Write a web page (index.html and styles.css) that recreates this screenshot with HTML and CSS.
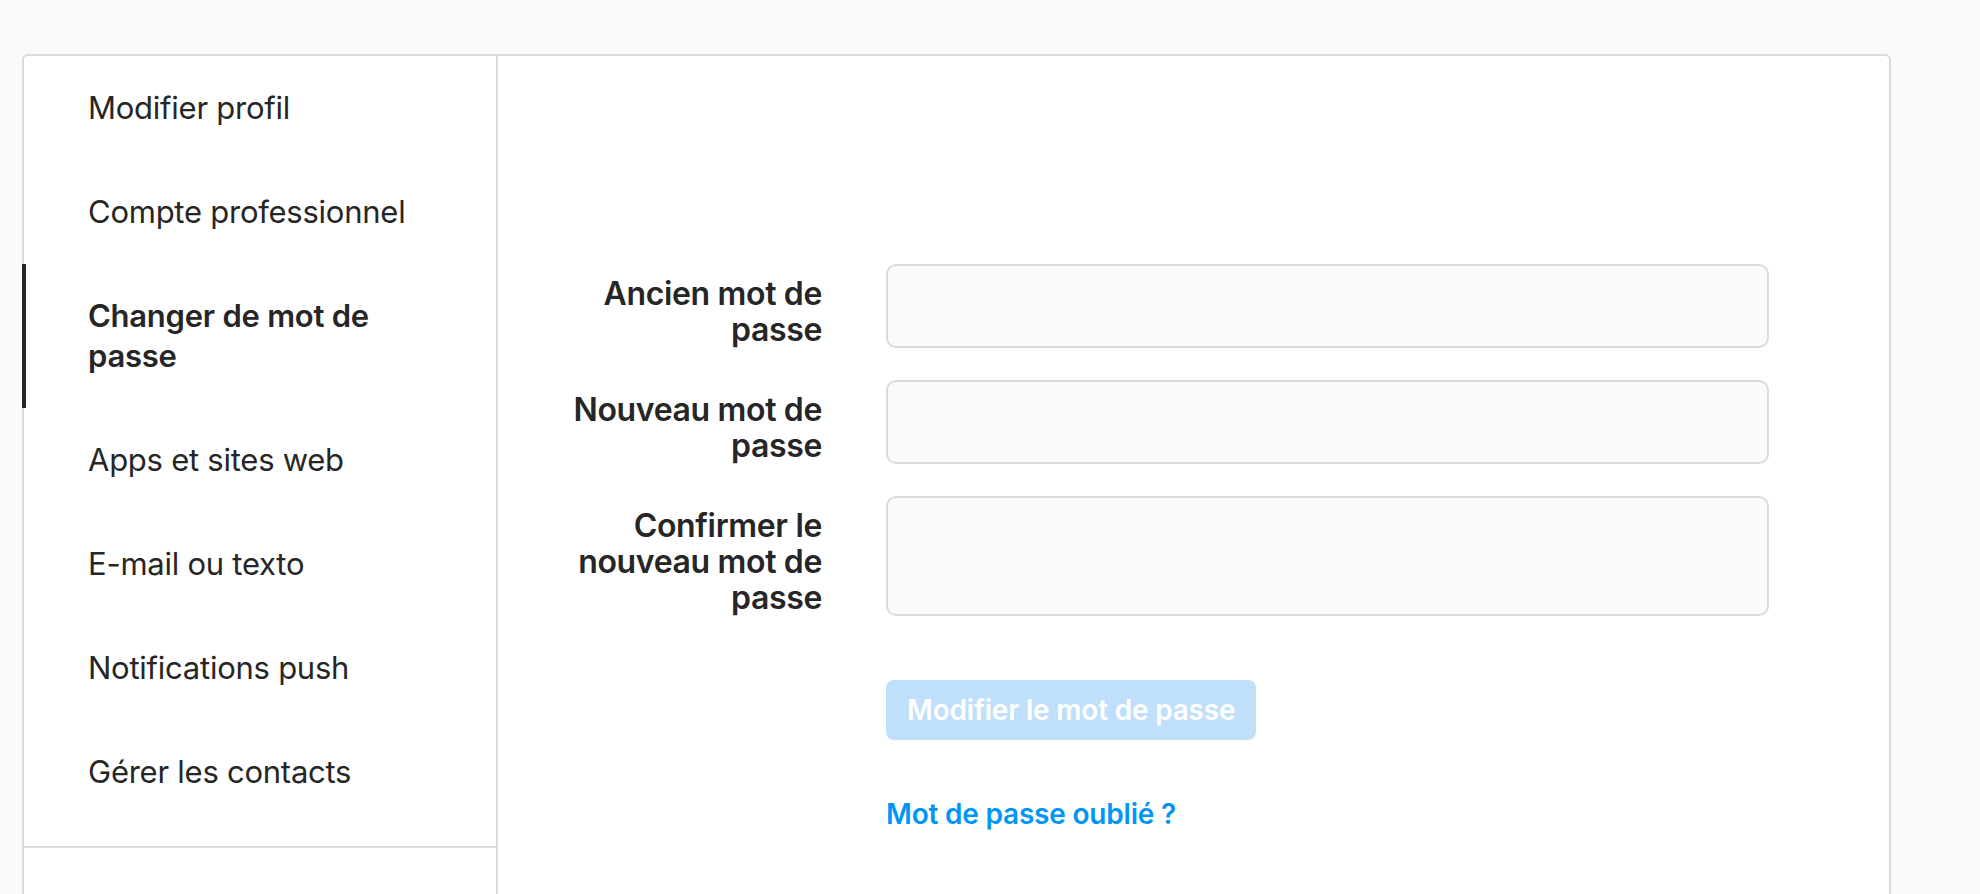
FILE: index.html
```html
<!DOCTYPE html>
<html lang="fr">
<head>
<meta charset="UTF-8" />
<title>Changer de mot de passe</title>
<link rel="stylesheet" href="styles.css">
</head>
<body>
<main class="page">
  <div class="card">
    <!-- menu de gauche -->
    <nav class="sidebar">
      <ul class="menu">
        <li><a href="#">Modifier profil</a></li>
        <li><a href="#">Compte professionnel</a></li>
        <li class="active"><a href="#">Changer de mot de passe</a></li>
        <li><a href="#">Apps et sites web</a></li>
        <li><a href="#">E-mail ou texto</a></li>
        <li><a href="#">Notifications push</a></li>
        <li><a href="#">Gérer les contacts</a></li>
      </ul>
      <div class="sidebar-foot"></div>
    </nav>

    <section class="panel">
      <form class="pwd-form">
        <div class="row">
          <label class="label" for="old">Ancien mot de passe</label>
          <input class="field" id="old" type="password" />
        </div>
        <div class="row">
          <label class="label" for="new">Nouveau mot de passe</label>
          <input class="field" id="new" type="password" />
        </div>
        <div class="row">
          <label class="label" for="confirm">Confirmer le nouveau mot de passe</label>
          <input class="field" id="confirm" type="password" />
        </div>
        <div class="row row-btn">
          <span class="label"></span>
          <div><button class="btn" type="button" disabled>Modifier le mot de passe</button></div>
        </div>
        <div class="row row-link">
          <span class="label"></span>
          <div><a class="forgot" href="#">Mot de passe oublié ?</a></div>
        </div>
      </form>
    </section>
  </div>
</main>
</body>
</html>
```

FILE: styles.css
```css
html, body { margin:0; padding:0; }
body { background:#fafafa; color:#262626; font-family:"Inter", "Noto Sans", sans-serif; overflow:hidden; }

.page { padding:54px 0 0 22px; }
.card { display:flex; width:1865px; min-height:900px; background:#fff; border:2px solid #dbdbdb; border-radius:6px; }

/* menu */
.sidebar { width:472px; flex-shrink:0; border-right:2px solid #dbdbdb; }
.menu { list-style:none; margin:0 0 0 -2px; padding:0 0 22px 0; }
.menu li { border-left:4px solid transparent; padding:32px 32px 32px 62px; }
.menu li a { display:block; color:#262626; text-decoration:none; font-size:31px; line-height:40px; letter-spacing:-0.25px; }
.menu li.active { border-left-color:#262626; }
.menu li.active a { font-weight:600; }
.sidebar-foot { border-top:2px solid #dbdbdb; height:120px; }

/* formulaire */
.panel { flex:1; padding:208px 120px 0 0; }
.row { display:flex; margin-bottom:32px; }
.label { width:260px; flex-shrink:0; padding:12px 64px 0 64px; text-align:right; font-size:32px; line-height:36px; font-weight:600; letter-spacing:-0.35px; color:#262626; }
.field { flex:1; min-width:0; box-sizing:border-box; background:#fafafa; border:2px solid #dbdbdb; border-radius:10px; min-height:84px; padding:0 20px; font-size:32px; outline:none; }
.row-btn { margin-top:64px; margin-bottom:0; }
.btn { height:60px; padding:0 21px; border:none; border-radius:8px; background:#c0dffb; color:#fff; font-family:inherit; font-size:28px; font-weight:600; letter-spacing:-0.2px; }
.row-link { margin-top:56px; }
.forgot { color:#0095f6; text-decoration:none; font-size:28px; line-height:36px; font-weight:600; letter-spacing:-0.2px; }
```
